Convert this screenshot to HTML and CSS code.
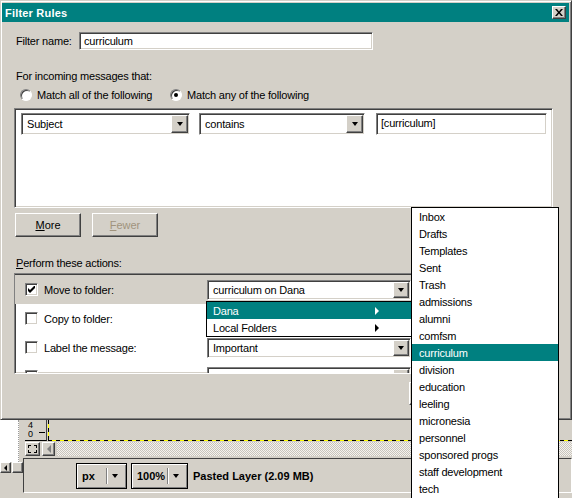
FILE: index.html
```html
<!DOCTYPE html>
<html lang="en">
<head>
<meta charset="UTF-8" />
<title>Filter Rules</title>
<link rel="stylesheet" href="styles.css">
</head>
<body>
<div class="screen">
  <div class="dialog">
    <div class="titlebar">
      <span class="title">Filter Rules</span>
      <span class="close"><svg width="8" height="7" viewBox="0 0 8 7"><path d="M0 0h2l2 2.5L6 0h2L5 3.5 8 7H6L4 4.5 2 7H0l3-3.5z" fill="#000"/></svg></span>
    </div>
    <div class="body">
      <div class="name-row">
        <label>Filter name:</label>
        <div class="field name-field">curriculum</div>
      </div>
      <p class="caption">For incoming messages that:</p>
      <div class="radios">
        <span class="radio"><i class="circle"></i>Match all of the following</span>
        <span class="radio on"><i class="circle"></i>Match any of the following</span>
      </div>
      <div class="listbox rules">
        <div class="rule-row">
          <div class="combo subject"><span class="val">Subject</span><b class="drop"><i class="tri-down"></i></b></div>
          <div class="combo operator"><span class="val">contains</span><b class="drop"><i class="tri-down"></i></b></div>
          <div class="field value">[curriculum]</div>
        </div>
      </div>
      <div class="buttons">
        <button class="btn"><u>M</u>ore</button>
        <button class="btn" disabled><u>F</u>ewer</button>
      </div>
      <p class="caption"><u>P</u>erform these actions:</p>
      <div class="listbox actions">
        <div class="action selected">
          <i class="check on"><svg width="7" height="7" viewBox="0 0 7 7"><path d="M0 2v3l2 2 5-5V-1L2 4z" fill="#000"/></svg></i>
          <span class="action-label">Move to folder:</span>
          <div class="combo small"><span class="val">curriculum on Dana</span><b class="drop"><i class="tri-down"></i></b></div>
        </div>
        <div class="action">
          <i class="check"></i>
          <span class="action-label">Copy to folder:</span>
        </div>
        <div class="action">
          <i class="check"></i>
          <span class="action-label">Label the message:</span>
          <div class="combo small"><span class="val">Important</span><b class="drop"><i class="tri-down"></i></b></div>
        </div>
        <div class="action">
          <i class="check"></i>
          <span class="action-label">Change the priority:</span>
          <div class="combo small"><span class="val">Highest</span><b class="drop"><i class="tri-down"></i></b></div>
        </div>
      </div>
      <div class="footer">
        <button class="btn ok"></button>
      </div>
    </div>
  </div>

  <div class="gimp">
    <div class="side">
      <div class="side-pane"></div>
      <div class="side-scroll">
        <span class="tiny-btn"><i class="tri-left"></i></span>
        <span class="tiny-btn"></span>
      </div>
    </div>
    <div class="image-win">
      <div class="canvas-row">
        <div class="ruler"><span>4</span><span>0</span><i class="tick"></i></div>
        <div class="canvas"></div>
      </div>
      <div class="nav-row">
        <span class="nav-btn"><i class="marquee"></i></span>
        <span class="arrow-btn"><i class="tri-left gray"></i></span>
        <div class="hscroll"></div>
      </div>
      <div class="statusbar">
        <div class="status-cell"></div>
        <div class="unit-box"><span class="unit">px</span><span class="sep"></span><i class="tri-down"></i></div>
        <div class="unit-box zoom"><span class="unit">100%</span><span class="sep"></span><i class="tri-down"></i></div>
        <span class="status-text">Pasted Layer (2.09 MB)</span>
      </div>
    </div>
  </div>

  <div class="menu accounts">
    <div class="item active"><span>Dana</span><i class="tri-right"></i></div>
    <div class="item"><span>Local Folders</span><i class="tri-right"></i></div>
  </div>

  <div class="menu folders">
    <div class="item">Inbox</div>
    <div class="item">Drafts</div>
    <div class="item">Templates</div>
    <div class="item">Sent</div>
    <div class="item">Trash</div>
    <div class="item">admissions</div>
    <div class="item">alumni</div>
    <div class="item">comfsm</div>
    <div class="item active">curriculum</div>
    <div class="item">division</div>
    <div class="item">education</div>
    <div class="item">leeling</div>
    <div class="item">micronesia</div>
    <div class="item">personnel</div>
    <div class="item">sponsored progs</div>
    <div class="item">staff development</div>
    <div class="item">tech</div>
  </div>
</div>
</body>
</html>
```

FILE: styles.css
```css
html,body {margin:0;padding:0;}
body {width:572px;height:498px;overflow:hidden;background:#d4d0c8;color:#000;font-family:"Liberation Sans",Arial,sans-serif;font-size:11px;letter-spacing:-0.2px;}
.screen {position:relative;width:572px;height:498px;overflow:hidden;}
p {margin:0;}
u {text-decoration:underline;text-underline-offset:1px;}

/* shared win classic bits */
.field,.combo,.listbox,.check {background:#fff;border:1px solid;border-color:#808080 #fff #fff #808080;box-shadow:inset 1px 1px #404040,inset -1px -1px #d4d0c8;box-sizing:border-box;}
.btn,.drop,.tiny-btn,.nav-btn,.arrow-btn {background:#d4d0c8;border:1px solid;border-color:#fff #404040 #404040 #fff;box-shadow:inset -1px -1px #808080;box-sizing:border-box;}
.tri-down {display:block;width:0;height:0;border-left:3.5px solid transparent;border-right:3.5px solid transparent;border-top:4px solid #000;}
.tri-left {display:block;width:0;height:0;border-top:4px solid transparent;border-bottom:4px solid transparent;border-right:4px solid #000;}
.tri-right {display:block;width:0;height:0;border-top:4px solid transparent;border-bottom:4px solid transparent;border-left:4px solid #000;}

/* dialog */
.dialog {box-sizing:border-box;height:420px;border:1px solid;border-color:#d4d0c8 #404040 #404040 #d4d0c8;box-shadow:inset 1px 1px #fff,inset -1px -1px #808080;}
.titlebar {display:flex;align-items:center;justify-content:space-between;height:19px;margin:2px 2px 0 1px;padding:0 3px 0 3px;background:#008080;color:#fff;font-weight:bold;font-size:11px;letter-spacing:0.2px;}
.close {display:flex;align-items:center;justify-content:center;width:14px;height:13px;background:#d4d0c8;box-sizing:border-box;border:1px solid;border-color:#fff #404040 #404040 #fff;box-shadow:inset -1px -1px #808080;}
.body {padding-left:13px;}

.name-row {display:flex;align-items:center;height:18px;margin-top:10px;}
.name-row label {width:63px;margin-left:2px;}
.name-field {width:294px;height:18px;padding-left:4px;line-height:16px;}

.caption {margin:19px 0 0 2px;line-height:14px;}
.radios {display:flex;align-items:center;height:14px;margin-top:5px;}
.radio {display:flex;align-items:center;}
.radio:first-child {width:150px;margin-left:6px;}
.circle {display:flex;align-items:center;justify-content:center;width:12px;height:12px;margin-right:5px;box-sizing:border-box;border-radius:50%;background:#fff;border:1px solid;border-color:#808080 #fff #fff #808080;box-shadow:inset 1px 1px #404040;}
.radio.on .circle::after {content:"";width:4px;height:4px;border-radius:50%;background:#000;}

.listbox {width:539px;}
.rules {height:100px;margin-top:6px;padding:4px 0 0 6px;}
.rule-row {display:flex;}
.combo {display:flex;align-items:center;padding:1px;}
.combo .val {flex:1;padding-left:4px;white-space:nowrap;overflow:hidden;}
.drop {display:flex;align-items:center;justify-content:center;width:17px;height:100%;}
.subject {width:169px;height:22px;}
.operator {width:166px;height:22px;margin-left:9px;}
.value {width:171px;height:22px;margin-left:11px;padding-left:4px;line-height:19px;}

.buttons {display:flex;gap:11px;margin:5px 0 0 1px;}
.btn {width:66px;height:24px;padding:0;font:inherit;color:#000;}
.btn:disabled {color:#a0937d;}

.actions {height:101px;margin-top:3px;padding-top:1px;overflow:hidden;}
.action {display:flex;align-items:center;height:29px;padding-left:10px;}
.action.selected {background:#d4d0c8;}
.check {display:flex;align-items:center;justify-content:center;width:13px;height:13px;}
.action-label {width:163px;margin-left:6px;}
.combo.small {width:204px;height:20px;}
.combo.small .drop {width:16px;}

.footer {display:flex;margin:8px 0 0 395px;}
.ok {width:75px;height:23px;}

/* popups */
.menu {position:absolute;background:#fff;border:1px solid #000;box-sizing:border-box;}
.menu .item {height:17px;line-height:18px;white-space:nowrap;}
.menu .item.active {background:#008080;color:#fff;}
.accounts {left:206px;top:301px;width:206px;height:36px;}
.accounts .item {display:flex;align-items:center;justify-content:space-between;padding:0 32px 0 6px;}
.accounts .item.active .tri-right {border-left-color:#fff;}
.folders {left:411px;top:207px;width:148px;height:300px;}
.folders .item {padding-left:7px;}

/* background image window */
.gimp {display:flex;height:78px;}
.side {width:23px;}
.side-pane {width:18px;height:42px;background:#fff;border-right:1px dotted #9a9a9a;}
.side-scroll {display:flex;gap:1px;}
.tiny-btn {display:flex;align-items:center;justify-content:center;width:12px;height:11px;}
.tiny-btn .tri-left {border-width:3px;}
.image-win {flex:1;display:flex;flex-direction:column;}
.canvas-row {display:flex;height:21px;}
.ruler {position:relative;display:flex;flex-direction:column;width:22px;margin-left:2px;padding:1px 0 0 3px;box-sizing:border-box;border-right:1px solid #404040;border-bottom:1px solid #000;font-size:9px;line-height:9px;letter-spacing:0;}
.tick {position:absolute;left:14px;top:12px;width:6px;height:1px;background:#000;}
.canvas {flex:1;background:
  repeating-linear-gradient(90deg,#000 0 4px,#ff0 4px 8px) left bottom/100% 1px no-repeat,
  repeating-linear-gradient(180deg,#000 0 4px,#ff0 4px 8px) left top/1px 100% no-repeat,
  #d4d0c8;margin-left:1px;}
.nav-row {display:flex;gap:2px;height:14px;margin:1px 0 0 2px;}
.nav-btn {display:flex;align-items:center;justify-content:center;width:15px;}
.marquee {width:7px;height:6px;border:1px dashed #000;}
.arrow-btn {display:flex;align-items:center;justify-content:center;width:13px;}
.tri-left.gray {border-right-color:#808080;}
.hscroll {flex:1;background:repeating-conic-gradient(#c8c4bc 0 25%,#f4f2ee 0 50%) 0 0/2px 2px;}
.statusbar {display:flex;align-items:center;height:35px;margin-top:2px;box-sizing:border-box;border:1px solid;border-color:#404040 #fff #fff #404040;font-weight:bold;letter-spacing:0;}
.status-cell {width:52px;}
.unit-box {display:flex;align-items:center;width:51px;height:26px;padding:0 8px 0 5px;box-sizing:border-box;border:1px solid #000;box-shadow:inset 1px 1px #fff,inset -1px -1px #808080;}
.unit-box.zoom {width:57px;margin-left:4px;}
.unit {flex:1;}
.sep {width:1px;height:16px;margin-right:5px;background:#808080;box-shadow:1px 0 #fff;}
.status-text {margin-left:5px;}
```
